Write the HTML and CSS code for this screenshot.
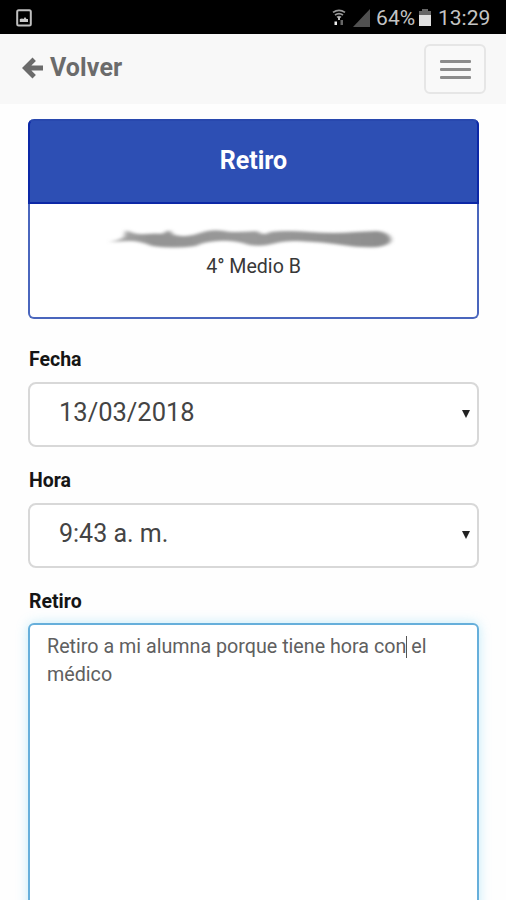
FILE: index.html
```
<!DOCTYPE html>
<html lang="es">
<head>
<meta charset="utf-8">
<meta name="viewport" content="width=device-width">
<title>Retiro</title>
<link rel="stylesheet" href="styles.css">
</head>
<body>
<div class="status">
  <svg class="status-photo" width="16" height="18" viewBox="0 0 16 18"><rect x="1.2" y="1.2" width="13.6" height="15.400" rx="1.5" fill="none" stroke="#c0c0c0" stroke-width="2"/><path d="M3.800 13v-3L6 9.500l1.500.500 1.500-2 1.500 2 1.500 0v3z" fill="#c9c9c9"/></svg>
  <svg class="status-wifi" width="14" height="17" viewBox="0 0 14 17"><g fill="none" stroke="#999" stroke-width="1.700"><path d="M1 3.400Q7-.8 13 3.400M3 6q4-2.800 8 0M5 8.400q2-1.400 4 0"/></g><path d="M6 8h2v3H6z" fill="#bbb"/><path d="M2.500 12.500H5V16H2.500z" fill="#eee"/><path d="M8.500 11H11v5H8.500z" fill="#666"/></svg>
  <svg class="status-signal" width="17" height="18" viewBox="0 0 17 18"><path d="M17 0v18H0z" fill="#505050"/></svg>
  <span class="status-percent">64%</span>
  <svg class="status-battery" width="12" height="17" viewBox="0 0 12 17"><path d="M3 0h6v2h3v5H0V2h3z" fill="#666"/><path d="M0 6h12v11H0z" fill="#e0e0e0"/></svg>
  <span class="status-time">13:29</span>
</div>
<header class="navbar">
  <a class="back">
    <svg width="22" height="22" viewBox="0 0 22 22"><path d="M12.200 2.200 3.400 11l8.800 8.800M4 11H21" fill="none" stroke="#6b6b6b" stroke-width="4.800"/></svg>
    <span>Volver</span>
  </a>
  <button class="toggle" aria-label="Menú"><i></i><i></i><i></i></button>
</header>
<main class="content">
  <section class="panel">
    <h1 class="panel-heading">Retiro</h1>
    <div class="panel-body">
      <svg class="smudge" width="290" height="26" viewBox="0 0 290 26">
        <defs>
          <filter id="soft" x="-5%" y="-50%" width="110%" height="200%"><feGaussianBlur stdDeviation="2.400 1.600"/></filter>
          <linearGradient id="shade"><stop offset="0" stop-color="#aaa"/><stop offset=".15" stop-color="#939393"/><stop offset=".5" stop-color="#999"/><stop offset="1" stop-color="#8d8d8d"/></linearGradient>
        </defs>
        <path filter="url(#soft)" d="M3 16Q14 14 18 11L20 4Q28 9 40 8T56 8L63 4 68 9Q82 12 94 7T124 6Q140 6 151 5 157 11 164 6 180 4 204 6T250 6L272 5Q284 7 285 13T272 21Q254 22 236 19T190 15Q176 15 166 18T143 19Q128 14 112 15T90 20Q68 23 46 20 34 15 24 15z" fill="url(#shade)"/>
      </svg>
      <p class="course">4° Medio B</p>
    </div>
  </section>
  <div class="field">
    <label>Fecha</label>
    <div class="select"><span class="date">13/03/2018</span><svg width="8" height="8" viewBox="0 0 8 8"><path d="M0 0h8L4 8z" fill="#222"/></svg></div>
  </div>
  <div class="field">
    <label>Hora</label>
    <div class="select"><span class="hour">9:43 a. m.</span><svg width="8" height="8" viewBox="0 0 8 8"><path d="M0 0h8L4 8z" fill="#222"/></svg></div>
  </div>
  <div class="field message">
    <label>Retiro</label>
    <div class="textarea">Retiro a mi alumna porque tiene hora con<span class="caret"></span> el<br>médico</div>
  </div>
</main>
</body>
</html>
```
FILE: styles.css
```
* { box-sizing: border-box; }
body {
  margin: 0;
  height: 900px;
  overflow: hidden;
  background: #fefefe;
  color: #222;
  font-family: Roboto, "Liberation Sans", sans-serif;
}
.status {
  height: 34px;
  display: flex;
  align-items: center;
  padding: 1px 15px 0 16px;
  background: #000;
  color: #c4c4c4;
  font-size: 21px;
  line-height: 34px;
}
.status-photo { margin-right: auto; }
.status-wifi { margin-right: 7px; }
.status-signal { margin-right: 6px; }
.status-percent { width: 43px; white-space: nowrap; letter-spacing: .1px; }
.status-time { width: 53px; margin-left: 7px; white-space: nowrap; }
.navbar {
  height: 70px;
  display: flex;
  align-items: flex-start;
  justify-content: space-between;
  padding: 10px 20px 0 22px;
  background: #f8f8f8;
}
.back {
  display: flex;
  align-items: center;
  gap: 6px;
  height: 48px;
  color: #6b6b6b;
  font-size: 25px;
  font-weight: 700;
}
.back span { position: relative; top: -1px; letter-spacing: .1px; }
.toggle {
  width: 62px;
  height: 50px;
  display: flex;
  flex-direction: column;
  align-items: center;
  justify-content: center;
  gap: 5px;
  padding: 0 0 0 1px;
  border: 2px solid #e6e6e6;
  border-radius: 6px;
  background: #f9f9f9;
}
.toggle i { width: 31px; height: 3px; border-radius: 1px; background: #8c8c8c; }
.content { padding: 15px 27px 0 28px; }
.panel {
  height: 200px;
  border: 2px solid #4a66bd;
  border-top: 0;
  border-radius: 6px;
  background: #fff;
}
.panel-heading {
  height: 85px;
  margin: 0 -2px;
  border: 2px solid #0c28a6;
  border-top-color: #2848ae;
  border-radius: 6px 6px 0 0;
  background: #2d4fb4;
  color: #fff;
  font-size: 25px;
  font-weight: 700;
  line-height: 80px;
  text-align: center;
}
.panel-body { display: flex; flex-direction: column; align-items: center; padding-top: 22px; }
.smudge { display: block; margin-right: 6px; }
.course { margin: 1px 0 0; font-size: 19.600px; line-height: 28px; color: #383838; }
.field { height: 121px; }
.panel + .field { margin-top: 27px; }
.field label {
  display: block;
  height: 36px;
  padding-left: 1px;
  color: #151515;
  font-size: 19.500px;
  font-weight: 700;
  line-height: 27px;
}
.message label { height: 35px; }
.select {
  height: 65px;
  display: flex;
  align-items: center;
  justify-content: space-between;
  padding: 0 7px 4px 29px;
  border: 2px solid #d8d8d8;
  border-radius: 8px;
  background: #fff;
  color: #444;
  font-size: 25.500px;
}
.select .date { position: relative; top: -1px; }
.select svg { position: relative; top: 1px; }
.hour { font-size: 25px; }
.textarea {
  height: 300px;
  padding: 8px 17px;
  border: 2px solid #66afdb;
  border-radius: 6px;
  background: #fff;
  box-shadow: 0 0 12px rgba(102, 205, 240, .4);
  color: #606060;
  font-size: 19.700px;
  line-height: 28px;
  white-space: nowrap;
}
.caret {
  display: inline-block;
  width: 1px;
  height: 22px;
  margin-right: -1px;
  background: #555;
  vertical-align: -5px;
}
```
